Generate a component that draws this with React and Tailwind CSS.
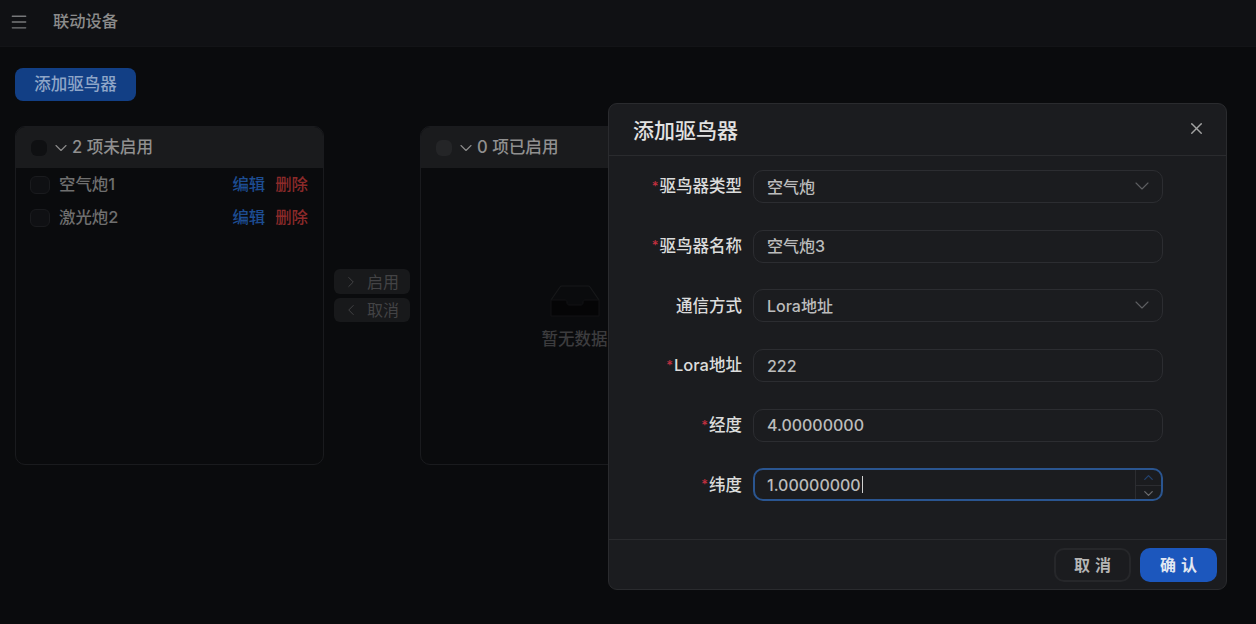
import React from "react";
import { ChevronDown, ChevronUp, ChevronRight, ChevronLeft, X, Menu } from "lucide-react";

const font = { fontFamily: '"Inter","Noto Sans CJK SC",sans-serif' };

function Panel({ title, box, children, className = "" }) {
  return (
    <div className={`flex h-[339px] w-[309px] shrink-0 flex-col overflow-hidden rounded-[10px] border border-[#1a1b1e] ${className}`}>
      <div className="flex h-[41px] shrink-0 items-center bg-[#1a1b1d] pl-[15px]">
        <span className={`h-[16px] w-[16px] rounded-[6px] ${box}`} />
        <ChevronDown size={20} strokeWidth={1.4} className="ml-[4px] text-[#8a8a8a]" />
        <span className="ml-[1px] text-[16.6px] font-medium text-[#909090]">{title}</span>
      </div>
      {children}
    </div>
  );
}

function Row({ name }) {
  return (
    <div className="flex h-[33px] items-center pl-[14px] pr-[15px] text-[16.4px]">
      <span className="h-[18px] w-[20px] rounded-[6px] border border-[#1a1b1e] bg-[#0f1013]" />
      <span className="ml-[9px] font-medium text-[#6f6f6f]">{name}</span>
      <span className="ml-auto font-medium text-[#1d4d92]">编辑</span>
      <span className="ml-[10px] font-medium text-[#8c2a2a]">删除</span>
    </div>
  );
}

function Field({ label, required, children, focused }) {
  return (
    <div className="flex h-[33px] items-center">
      <div className="flex w-[134px] shrink-0 items-center justify-end text-[16.5px] font-medium text-[#dcdcdc]">
        {required && <span className="mr-[1px] text-[13px] text-[#c2303f]">*</span>}
        {label}
      </div>
      <div
        className={`relative ml-[11px] flex h-[33px] w-[410px] items-center rounded-[10px] pl-[13px] text-[16px] font-medium text-[#bcbcbc] ${
          focused ? "border-2 border-[#2a5590]" : "border border-[#2c2d31]"
        }`}
      >
        {children}
      </div>
    </div>
  );
}

const Arrow = () => (
  <ChevronDown size={24} strokeWidth={1.1} className="absolute right-[8px] top-[3px] text-[#5e5f62]" />
);

export default function App() {
  return (
    <div style={font} className="relative h-[624px] w-[1256px] overflow-hidden bg-[#0a0b0d]">
      <header className="flex h-[47px] items-center border-b border-[#131417] bg-[#101114] pb-[3px] pl-[9px]">
        <Menu size={20} strokeWidth={1.7} className="text-[#77787a]" />
        <span className="ml-[24px] text-[16.3px] font-medium text-[#8b8b8b]">联动设备</span>
      </header>
      <main className="px-[15px] pt-[21px]">
        <button className="flex h-[33px] w-[121px] items-center justify-center rounded-[8px] bg-[#123f85] text-[16.5px] font-medium text-[#8fa6c8]">
          添加驱鸟器
        </button>
        <div className="mt-[25px] flex items-start">
          <Panel title="2 项未启用" box="bg-[#0f1012]">
            <div>
              <Row name="空气炮1" />
              <Row name="激光炮2" />
            </div>
          </Panel>
          <div className="ml-[10px] mt-[143px] flex w-[76px] shrink-0 flex-col gap-[4px]">
            <div className="flex h-[25px] items-center rounded-[6px] bg-[#18191b] pl-[8px] text-[16px] text-[#434345]">
              <ChevronRight size={18} strokeWidth={1.3} />
              <span className="ml-[7px]">启用</span>
            </div>
            <div className="flex h-[24px] items-center rounded-[6px] bg-[#18191b] pl-[8px] text-[16px] text-[#434345]">
              <ChevronLeft size={18} strokeWidth={1.3} />
              <span className="ml-[7px]">取消</span>
            </div>
          </div>
          <Panel title="0 项已启用" box="bg-[#242527]" className="ml-[10px]">
            <div className="flex flex-1 flex-col items-center pt-[116px]">
              <svg width="50" height="34" viewBox="0 0 50 34" fill="none">
                <path d="M1 16 10 3a2 2 0 0 1 2-1h26a2 2 0 0 1 2 1l9 13" stroke="#17181a" strokeWidth="1.2" />
                <path d="M1 16h14c1 0 2 1 2 2v1c0 1 1 2 2 2h12c1 0 2-1 2-2v-1c0-1 1-2 2-2h14v16H1z" fill="#050506" stroke="#121315" />
              </svg>
              <span className="mt-[9px] text-[16.5px] font-medium text-[#3c3c3e]">暂无数据</span>
            </div>
          </Panel>
        </div>
      </main>

      <div className="absolute left-[608px] top-[103px] flex h-[487px] w-[619px] flex-col rounded-[9px] border border-[#2a2b2e] bg-[#1b1c1f]">
        <div className="flex h-[52px] shrink-0 items-center border-b border-[#2a2b2e] pl-[24px] pr-[20px]">
          <span className="relative top-[1px] text-[21px] font-medium text-[#e2e2e2]">添加驱鸟器</span>
          <X size={19} strokeWidth={1.8} className="ml-auto -mt-[2px] text-[#a3a3a3]" />
        </div>
        <div className="-ml-[1px] flex flex-1 flex-col gap-[26.7px] pt-[14px]">
          <Field label="驱鸟器类型" required>空气炮<Arrow /></Field>
          <Field label="驱鸟器名称" required>空气炮3</Field>
          <Field label="通信方式">Lora地址<Arrow /></Field>
          <Field label="Lora地址" required>222</Field>
          <Field label="经度" required>4.00000000</Field>
          <Field label="纬度" required focused>
            <span className="-ml-[1px]">1.00000000</span>
            <span className="ml-[1px] h-[17px] w-px bg-[#d0d0d0]" />
            <div className="absolute bottom-0 right-0 top-0 flex w-[26px] flex-col border-l border-[#2c2d31]">
              <div className="flex flex-1 items-center justify-center border-b border-[#2c2d31]">
                <ChevronUp size={15} strokeWidth={2} className="text-[#23426f]" />
              </div>
              <div className="flex flex-1 items-center justify-center">
                <ChevronDown size={15} strokeWidth={2} className="text-[#6a6b6e]" />
              </div>
            </div>
          </Field>
        </div>
        <div className="flex h-[50px] shrink-0 items-start justify-end gap-[9px] border-t border-[#2a2b2e] pr-[9px] pt-[8px]">
          <button className="h-[34px] w-[77px] rounded-[10px] border-2 border-[#26272a] pl-[5px] text-[16px] font-semibold tracking-[5px] text-[#b5b5b5]">
            取消
          </button>
          <button className="h-[34px] w-[77px] rounded-[10px] bg-[#1c57bd] pl-[5px] text-[16px] font-semibold tracking-[5px] text-[#e2e8f2]">
            确认
          </button>
        </div>
      </div>
    </div>
  );
}
